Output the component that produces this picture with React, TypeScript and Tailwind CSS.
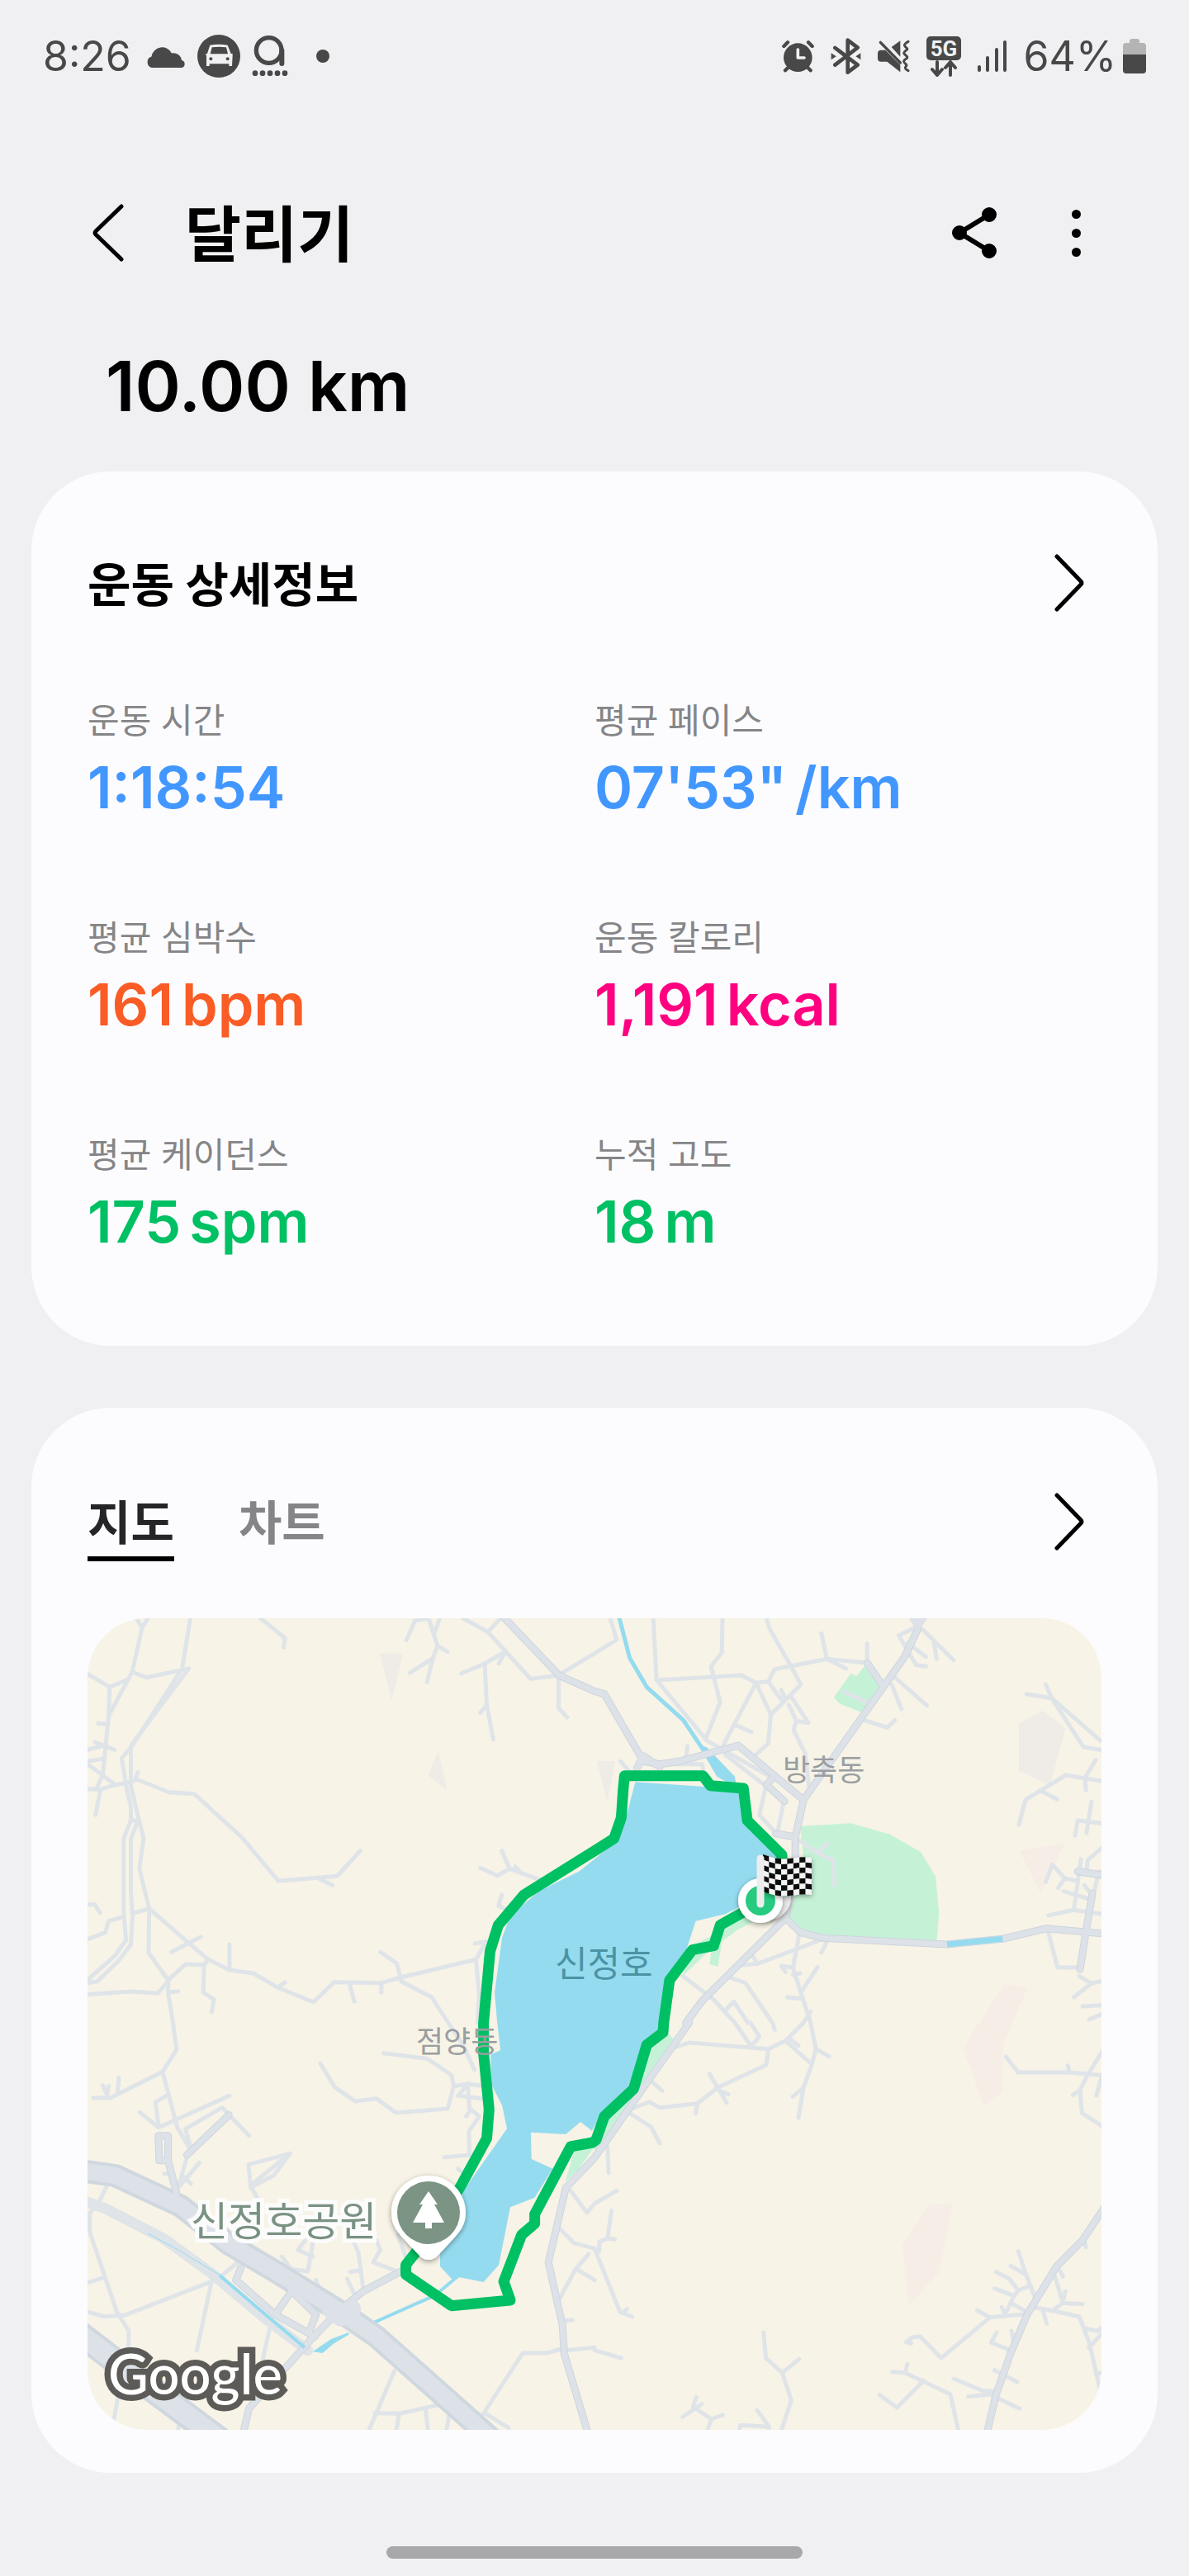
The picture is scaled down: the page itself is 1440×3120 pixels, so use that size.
import type { ReactNode } from "react";

/* ---------- map geometry ----------
   The map sheet is split into four quarters (A top left, B top right,
   C bottom left, D bottom right), each with its own 1568 x 1500 grid.
   A letter in a point list switches the quarter. */
const QUARTERS: Record<string, [number, number]> = {
  A: [-6, -10],
  B: [614, -10],
  C: [-6, 490],
  D: [614, 490],
};

function pts(list: string): string {
  let origin = QUARTERS.A;
  const out: string[] = [];
  for (const token of list.trim().split(/\s+/)) {
    if (QUARTERS[token]) {
      origin = QUARTERS[token];
      continue;
    }
    const [x, y] = token.split(",").map(Number);
    out.push(`${(origin[0] + (x * 620) / 1568).toFixed(1)},${(origin[1] + y / 3).toFixed(1)}`);
  }
  return out.join(" ");
}

const LAKE =
  "B 125,625 440,650 455,765 570,890 570,950 480,1040 435,1085 400,1105 310,1130 280,1240 230,1340 212,1500 D 205,35 150,85 115,240 25,330 0,375 C 1560,392 1525,360 1480,405 1373,398 1375,495 1440,530 1385,635 1310,670 1275,880 1228,942 1155,925 1130,930 1095,885 1095,840 1160,620 1300,385 1285,300 1250,220 1250,115 1280,100 1270,0 A 1262,1390 1285,1190 1310,1110 1400,1020 1520,950 1568,905 B 75,830 95,760";

const ROUTE =
  "B 580,1040 574,890 468,765 456,648 355,638 332,602 92,602 88,650 82,755 60,830 0,875 A 1352,1035 1273,1145 1248,1240 1228,1500 C 1228,110 1245,315 1238,420 1155,600 1050,790 990,880 990,915 1130,1028 1310,1008 1290,940 1345,770 1385,730 1385,695 1495,450 1562,435 D 5,425 30,340 120,240 160,80 210,35 B 212,1500 230,1345 300,1235 365,1220 385,1145 460,1095 510,1060";

const PARKS = [
  "B 630,785 785,775 905,815 1000,880 1045,970 1055,1100 1048,1205 700,1190 630,1170 595,1115 640,900",
  "B 785,230 803,240 827,203 880,285 825,375 750,340 733,318",
  "B 500,1125 440,1160 390,1205 378,1295 353,1288 358,1230 270,1330 300,1220 380,1170 450,1110",
  "D 225,35 242,60 150,220 105,320 30,440 0,465 0,430 30,340 120,240 160,80",
  "C 1505,470 1568,450 1520,530 1478,578",
];

const GREY_PATCHES = [
  "A 911,158 981,158 947,330",
  "A 1090,512 1058,600 1117,657",
  "B 1372,365 1443,430 1395,635 1300,585 1300,412",
  "B 7,548 62,548 40,700",
];

const PINK_PATCHES = [
  "B 1302,875 1440,845 1367,1030",
  "B 1252,1362 1327,1370 1280,1500 1180,1500",
  "D 1175,0 1282,0 1252,75 1252,248 1192,302 1130,95",
  "D 1022,662 1098,656 1055,905 963,1030 943,810",
];

const LANES = [
  "A 165,30 182,65 200,30",
  "A 182,65 152,225 195,245 325,213",
  "A 330,30 305,213",
  "A 152,225 80,385 62,600",
  "A 15,232 83,280 135,255",
  "A 83,280 80,385",
  "A 48,412 75,415",
  "A 15,508 65,492 38,480 98,508",
  "A 15,550 65,540",
  "A 15,560 62,600 100,635",
  "A 15,650 55,652 100,635 150,625",
  "A 62,600 42,650 55,652 40,745",
  "A 325,213 150,490",
  "A 305,213 148,500 120,538 135,650 148,715 148,765 126,830 126,1100 133,1200 100,1255 15,1345",
  "A 148,500 148,640 170,750 187,830 174,940 204,1085 325,1210 385,1270 450,1308 523,1320 598,1372 707,1425 770,1352 915,1355 975,1335 1205,1270 1215,1400 1210,1500",
  "A 165,615 265,662 342,668 487,825 600,985 780,967 850,875",
  "A 160,620 170,590",
  "A 725,977 765,1000",
  "A 170,765 148,830 148,1020 153,1110 148,1215 110,1275 45,1350 15,1355",
  "A 148,765 170,765",
  "A 153,1103 204,1085",
  "A 15,1070 38,1070 53,1100",
  "A 15,1197 70,1172 80,1130 125,1115",
  "A 272,1243 362,1188",
  "A 204,1085 202,1245 262,1345 262,1390 277,1500 C 288,97 245,178 85,273 33,273",
  "A 262,1345 315,1287 372,1290 385,1270",
  "A 372,1290 370,1390 402,1415 396,1460",
  "A 450,1215 450,1308",
  "A 15,1397 150,1386 230,1393 262,1350",
  "A 262,1388 292,1386",
  "A 598,1372 620,1353",
  "A 817,1355 832,1422",
  "A 915,1355 915,1390",
  "A 912,1243 962,1283 977,1350 1070,1408 1120,1500 C 1165,80 1200,170",
  "A 1205,1270 1235,1205 1202,1212",
  "A 545,30 620,102 616,136",
  "A 1060,30 1018,40 992,110",
  "A 1060,30 1087,130 1118,152",
  "A 1094,30 1077,85",
  "A 1087,130 1073,175 1003,228",
  "A 1073,175 1055,262",
  "A 1165,30 1242,80 1372,250 1460,238",
  "A 1280,30 1242,80",
  "A 1160,230 1232,195 1295,150 1275,195",
  "A 1232,195 1238,345 1258,470",
  "A 1238,345 1218,373",
  "A 1458,245 1458,357 1484,390",
  "A 1460,235 1568,158 B 68,108 48,30",
  "A 1284,875 1308,940 1270,965 1218,937",
  "A 1308,940 1400,980",
  "A 1325,932 1345,958",
  "A 1284,1035 1274,1075 1300,1090",
  "B 180,30 190,255 275,375 345,475 560,620",
  "B 190,255 450,237 495,265 395,490",
  "B 392,30 390,155 357,205 385,335 340,470",
  "B 527,30 535,65 600,200 632,270 600,310 540,380 532,485 495,525",
  "B 495,265 532,260 552,215 712,178 835,192 835,122",
  "B 712,178 695,85",
  "B 712,178 770,213",
  "B 495,265 540,380",
  "B 532,260 575,330",
  "B 572,290 585,325",
  "B 600,310 655,410 618,403",
  "B 595,345 618,403 610,437 645,520 658,650",
  "B 435,420 480,443",
  "B 765,298 840,338",
  "B 980,65 932,92 985,200 1015,205",
  "B 960,120 1015,170",
  "B 1000,65 1100,182",
  "B 1040,120 1048,178",
  "B 920,245 1018,347",
  "B 910,270 940,360",
  "B 825,400 897,427 920,400",
  "B 285,495 280,540",
  "B 80,550 110,590",
  "B 230,560 330,560 335,600",
  "B 400,525 525,640 505,745 555,810",
  "B 580,695 562,800",
  "B 625,835 680,880 730,910 735,1000",
  "B 680,880 715,850",
  "B 1323,305 1400,320 1550,475",
  "B 1382,270 1400,320 1497,497 1568,512",
  "B 1300,780 1320,690 1443,600 1568,625",
  "B 1365,655 1417,688",
  "B 1505,655 1502,610 1535,545",
  "B 1472,820 1480,765 1568,777",
  "B 1522,697 1507,810",
  "B 1568,850 1510,910 1508,945",
  "B 1490,905 1468,1090 1568,1107",
  "B 1382,988 1402,925 1440,975 1480,985",
  "B 1420,1010 1440,975",
  "B 1437,1022 1515,1050",
  "B 1390,1110 1468,1090",
  "B 1500,1000 1520,1030",
  "B 1545,950 1525,1050",
  "B 1390,1170 1418,1298 1487,1300",
  "B 1485,1330 1522,1357 1468,1407",
  "B 1522,1357 1568,1345",
  "B 1495,1440 1568,1435",
  "B 1515,1487 1568,1462",
  "B 627,1180 608,1300 632,1390 662,1500 D 678,95 665,155 640,235 625,345",
  "B 695,1245 712,1205",
  "B 455,1290 500,1285 690,1200",
  "B 480,1250 500,1285",
  "B 585,1315 572,1293 610,1300",
  "B 608,1325 630,1320",
  "B 632,1390 683,1298",
  "B 590,1407 632,1412",
  "B 270,1330 365,1415 430,1500 D 480,85 505,50 478,0",
  "B 405,1450 427,1423 470,1500",
  "B 412,1335 462,1355 545,1500 D 552,25",
  "B 662,1460 640,1500 D 585,65 532,95 290,72 240,92",
  "D 585,65 665,150",
  "D 600,60 625,83",
  "D 678,95 718,122",
  "D 640,235 607,268",
  "D 532,95 526,153 378,235 315,293 200,308 168,287 115,312",
  "D 352,185 405,290",
  "D 390,250 410,260",
  "D 315,293 310,330",
  "D 170,208 208,247",
  "D 110,330 173,378 200,438",
  "D 40,450 43,545",
  "D 68,610 0,657 C 1545,690 1495,610",
  "C 1455,740 1505,800 1568,820 D 15,830 15,795 40,783 52,683",
  "D 40,783 62,787",
  "D 0,820 78,1050 115,1068",
  "D 85,1055 100,1040",
  "C 1550,840 1510,895 1462,1000",
  "C 1520,900 1568,935",
  "C 1480,1190 1568,1180 D 0,1190 82,1218",
  "C 1480,1082 1500,1080",
  "D 1260,122 1297,180 1450,180 1568,192",
  "D 1450,155 1455,180",
  "D 1568,80 1510,190 1487,245 1493,328 1568,385",
  "D 1465,262 1487,245",
  "D 1555,190 1537,265",
  "D 518,1125 525,1218 575,1272 603,1372 567,1500",
  "D 575,1272 627,1222",
  "D 312,1360 302,1395 358,1440 340,1500",
  "D 270,1432 328,1385",
  "D 358,1440 393,1425",
  "D 440,1500 447,1462 535,1468 498,1408",
  "D 535,1468 528,1500",
  "D 873,1352 927,1398 1008,1300",
  "D 912,1268 952,1272 1090,1350 1118,1500",
  "D 952,1272 958,1240",
  "D 970,1165 955,1160 975,1142 998,1140 1062,1218 1212,1070 1322,1058",
  "D 1172,1045 1212,1070",
  "D 1298,830 1322,915 1350,1000",
  "D 1275,883 1322,915",
  "D 1230,905 1270,930 1298,972 1335,955",
  "D 1225,965 1285,992 1298,972",
  "D 1285,992 1258,1058 1247,1033",
  "D 1280,1020 1322,1050",
  "D 1350,1035 1400,1045 1485,1068 1515,1160 1550,1340",
  "D 1410,920 1435,1018 1400,1048",
  "D 1435,1018 1495,1022",
  "D 1435,1010 1442,975",
  "D 1420,890 1435,922",
  "D 1375,1050 1385,1093",
  "D 1500,1110 1540,1120 1568,1095",
  "D 1515,1180 1568,1110",
  "D 1535,1275 1568,1270",
  "D 1232,1125 1215,1162 1275,1190",
  "D 1277,1120 1285,1165",
  "D 1225,1262 1295,1305",
  "D 1100,1293 1190,1337 1235,1340",
  "D 1145,1358 1210,1350 1302,1402",
  "D 1500,790 1505,815",
  "C 62,228 75,262 80,230",
  "C 111,200 108,250",
  "C 245,178 290,380 330,460",
  "C 175,325 233,380 450,265",
  "C 262,262 223,288 233,375",
  "C 330,450 315,385 428,308 510,410",
  "C 290,610 322,480",
  "C 300,590 358,508",
  "C 310,560 332,585",
  "C 250,548 270,548",
  "C 515,590 635,475 508,515 515,595 535,635",
  "C 515,598 585,555 635,475",
  "C 728,148 773,235 835,285 900,275 960,327 1118,312 1137,230 1130,190 1055,130 922,110",
  "C 1137,230 1180,222 1230,230",
  "C 1180,222 1150,265 1225,275",
  "C 1180,230 1185,310 1215,340 1183,395 1185,480 1108,488",
  "C 1175,340 1190,315",
  "C 1150,530 1165,545",
  "C 75,590 45,665 22,690 22,760 105,1050 142,1120 140,1180",
  "C 15,945 65,925",
  "C 15,1050 65,1067 130,1062 395,940 350,1190",
  "C 420,925 480,865",
  "C 575,1100 545,1260",
  "C 610,850 640,895 690,903 705,800",
  "C 705,850 660,825 685,785",
  "C 820,770 845,835 860,970",
  "C 900,790 912,825 890,870 980,910",
  "C 820,905 845,900",
  "C 810,930 830,980",
  "C 715,935 730,975",
  "C 675,930 665,950",
  "C 965,770 990,850",
  "C 955,1265 870,1500",
  "C 895,1418 970,1420 1085,1390",
  "C 970,1420 958,1500",
  "C 1050,1400 1060,1500",
  "C 1125,1410 1112,1500",
  "C 1225,1425 1348,1200 1422,1200 1480,1180",
  "C 1235,1420 1305,1472",
  "C 110,1350 95,1450",
  "C 295,1460 290,1500",
];

const STREETS = [
  "A 1285,20 1460,238 1568,295 B 30,305 150,550 200,560 260,550 440,492 640,690",
  "B 130,575 150,530 200,570",
  "B 545,610 527,635 582,695",
  "B 835,192 885,278",
  "B 990,30 990,70 950,170 640,690 615,825 615,950 585,1120 330,1420 280,1500 D 290,0 165,210 30,440 0,490 C 1480,600 1427,870 1470,1100 1475,1200 1550,1500",
  "B 555,812 615,825",
  "B 585,1120 632,1172 700,1192 1080,1215 1250,1195 1385,1157 1568,1177",
  "B 1480,950 1568,965",
  "B 1525,1030 1505,1170 1487,1305",
  "D 1568,660 1495,790 1415,885 1325,1060 1275,1200 1230,1350 1200,1500",
  "C 448,335 320,480",
  "C 288,620 262,500 235,500 232,410 262,410 262,500",
  "C 485,890 470,935 590,1060 640,975",
  "C 590,1060 712,1140",
  "C 640,975 715,1060 695,1120",
  "C 490,1500 510,1400 610,1270 700,1150 790,1040 860,975 980,900",
];

const NOTO = "'Noto Sans CJK KR', sans-serif";

/* Chequered cloth of the finish flag, drawn with a slight wave. */
function FlagCloth() {
  const cols = 8;
  const rows = 7;
  const at = (c: number, r: number) => {
    const t = c / cols;
    const x = 818 + t * 59;
    const y = 286 + (r * 45) / rows + t * 7 + Math.sin(t * Math.PI * 1.6) * 3;
    return `${x.toFixed(1)},${y.toFixed(1)}`;
  };
  const cells: ReactNode[] = [];
  for (let c = 0; c < cols; c++) {
    for (let r = 0; r < rows; r++) {
      cells.push(
        <polygon
          key={`${c}-${r}`}
          points={`${at(c, r)} ${at(c + 1, r)} ${at(c + 1, r + 1)} ${at(c, r + 1)}`}
          fill={(c + r) % 2 === 0 ? "#0c0c0c" : "#f4f4f4"}
        />,
      );
    }
  }
  return <g filter="url(#shadow)">{cells}</g>;
}

function RouteMap() {
  return (
    <svg viewBox="0 0 1228 983" className="block h-auto w-full rounded-[72px]" role="img" aria-label="달리기 경로 지도">
      <defs>
        <filter id="shadow" x="-30%" y="-30%" width="160%" height="170%">
          <feDropShadow dx="0" dy="2" stdDeviation="3" floodColor="#000" floodOpacity="0.4" />
        </filter>
      </defs>
      <rect width="1228" height="983" fill="#f7f3e6" />
      <g fill="#efebe7">
        {GREY_PATCHES.map((p) => (
          <polygon key={p} points={pts(p)} />
        ))}
      </g>
      <g fill="#f7ede7">
        {PINK_PATCHES.map((p) => (
          <polygon key={p} points={pts(p)} />
        ))}
      </g>
      <g fill="#c5f2d7">
        {PARKS.map((p) => (
          <polygon key={p} points={pts(p)} />
        ))}
      </g>
      <g fill="none" stroke="#dfe4e9" strokeWidth="5" strokeLinecap="round" strokeLinejoin="round">
        {LANES.map((p) => (
          <polyline key={p} points={pts(p)} />
        ))}
      </g>
      <polygon points={pts(LAKE)} fill="#95dbef" />
      <g fill="none" stroke="#95dbef">
        <polyline points={pts("B 75,25 108,175 160,280 272,400 340,520")} strokeWidth="5" />
        <polyline points={pts("C 1150,920 1080,990 875,1098")} strokeWidth="4" />
      </g>
      <polygon points={pts("B 325,490 345,500 430,605 435,645 375,605 340,535")} fill="#95dbef" />
      <g fill="none" strokeLinecap="round" strokeLinejoin="round">
        <polyline points={pts("C 0,645 70,675 250,785 400,915 560,1075 690,1190")} stroke="#dfe4e9" strokeWidth="13" />
        {STREETS.map((p) => (
          <polyline key={p} points={pts(p)} stroke="#cdd5de" strokeWidth="9" />
        ))}
        <g stroke="#cfd7df">
          <polyline points={pts("C -20,535 100,555 300,665 450,805 600,910 790,1050 900,1140 1280,1540")} strokeWidth="28" />
          <polyline points={pts("C -20,1120 200,1320 460,1550")} strokeWidth="32" />
        </g>
        <g stroke="#dde2e8">
          {STREETS.map((p) => (
            <polyline key={p} points={pts(p)} strokeWidth="7" />
          ))}
          <polyline points={pts("C -20,535 100,555 300,665 450,805 600,910 790,1050 900,1140 1280,1540")} strokeWidth="20" />
          <polyline points={pts("C -20,1120 200,1320 460,1550")} strokeWidth="24" />
          <polyline points={pts("C 760,1040 790,1070 825,1040")} strokeWidth="22" />
        </g>
        <polyline points={pts("B 965,15 990,62 1018,15")} stroke="#dde2e8" strokeWidth="7" />
        <g stroke="#95dbef" strokeLinecap="butt">
          <polyline points={pts("C 200,765 300,830 425,920")} strokeWidth="1" />
          <polyline points={pts("C 420,918 580,1080 680,1180")} strokeWidth="4" />
          <polyline points={pts("B 1080,1215 1250,1195")} strokeWidth="7" />
        </g>
      </g>
      <polygon points={pts("C 705,1195 760,1150 815,1125 815,1133 770,1165 735,1200")} fill="#95dbef" />

      <g filter="url(#shadow)">
        <circle cx="825" cy="338" r="27" fill="#e9e9e9" />
      </g>
      <polyline points={pts(ROUTE)} fill="none" stroke="#00c064" strokeWidth="13" strokeLinejoin="round" />
      <g filter="url(#shadow)">
        <circle cx="815" cy="342" r="27" fill="#fff" />
      </g>
      <circle cx="815" cy="342" r="18" fill="#26cb80" />
      <FlagCloth />
      <line x1="815" y1="291" x2="815" y2="346" stroke="#ededed" strokeWidth="9" strokeLinecap="round" />

      <text x="566" y="434" fontSize="43" fill="#4b93a4" fontFamily={NOTO}>신정호</text>
      <text x="842" y="197" fontSize="36" fill="#9a9ea2" fontFamily={NOTO}>방축동</text>
      <text x="398" y="526" fontSize="36" fill="#9a9ea2" fontFamily={NOTO}>점양동</text>
      <text
        x="125"
        y="748"
        fontSize="49"
        fill="#7a9282"
        stroke="#fcfcfc"
        strokeWidth="10"
        paintOrder="stroke"
        fontFamily={NOTO}
      >
        신정호공원
      </text>

      <g filter="url(#shadow)">
        <path d="M413 675c25 0 45 20 45 45 0 16-8 24-18 35l-15 16c-7 8-17 8-24 0l-15-16c-10-11-18-19-18-35 0-25 20-45 45-45Z" fill="#fff" />
      </g>
      <circle cx="413" cy="720" r="38" fill="#7b9484" />
      <path d="m413 694 11 16h-4l12 22h-15v7h-8v-7h-15l12-22h-4Z" fill="#fff" />

      <text
        x="25"
        y="940"
        fontSize="67"
        fontWeight="500"
        fill="#fff"
        stroke="#5c5b57"
        strokeWidth="15"
        paintOrder="stroke"
        fontFamily="Lato, sans-serif"
      >
        Google
      </text>
    </svg>
  );
}

/* ---------- status bar icons ---------- */
function CloudIcon() {
  return (
    <svg width="48" height="27" viewBox="0 0 48 27" fill="#484848" aria-hidden="true">
      <path d="M7 27a7 7 0 0 1-.5-13.5A13 13 0 0 1 31 9.500A10 10 0 0 1 43 18a4.600 4.600 0 0 1 0 9Z" />
    </svg>
  );
}

function CarIcon() {
  return (
    <svg width="52" height="52" viewBox="0 0 156 156" aria-hidden="true">
      <circle cx="78" cy="78" r="78" fill="#484848" />
      <path
        fill="#f0f0f2"
        fillRule="evenodd"
        d="M46 38q32-5 64 0l12 31h6v8l-2 37h-11v-8H44v8H33V77l-3-8h6ZM53 46 47 70h64l-6-24q-26-4-52 0ZM49 82a6 6 0 1 0 .1 0ZM110 82a6 6 0 1 0 .1 0Z"
      />
    </svg>
  );
}

function RingAppIcon() {
  return (
    <svg width="44" height="50" viewBox="0 0 132 150" fill="none" stroke="#484848" aria-hidden="true">
      <circle cx="62" cy="54" r="46" strokeWidth="16" />
      <path d="M109 54v48" strokeWidth="18" strokeLinecap="round" />
      <g fill="#484848" stroke="none">
        <circle cx="12" cy="137" r="10" />
        <circle cx="39" cy="137" r="10" />
        <circle cx="66" cy="137" r="10" />
        <circle cx="93" cy="137" r="10" />
        <circle cx="120" cy="137" r="10" />
      </g>
    </svg>
  );
}

function AlarmIcon() {
  return (
    <svg width="39" height="40" viewBox="0 0 117 120" fill="none" stroke="#484848" strokeLinecap="round" aria-hidden="true">
      <circle cx="58" cy="65" r="52" fill="#484848" stroke="none" />
      <path d="M7 24 21 10M110 24 96 10" strokeWidth="13" />
      <path d="m22 102-10 10M94 102l10 10" strokeWidth="13" />
      <path d="M58 36v30h23" stroke="#f0f0f2" strokeWidth="11" strokeLinejoin="round" />
    </svg>
  );
}

function BluetoothIcon() {
  return (
    <svg width="37" height="44" viewBox="0 0 111 132" fill="none" stroke="#484848" aria-hidden="true">
      <path d="m16 36 82 62-36 27V8l36 27-82 63" strokeWidth="14" strokeLinecap="round" strokeLinejoin="round" />
      <path d="M2 55v24l18-12ZM109 55v24L91 67Z" fill="#484848" stroke="none" />
    </svg>
  );
}

function MuteVibrateIcon() {
  return (
    <svg width="39" height="40" viewBox="0 0 117 120" fill="none" stroke="#484848" strokeLinecap="round" aria-hidden="true">
      <path d="M82 4v58L50 27ZM0 50q0-12 12-12h16l54 54v26L34 80H12Q0 80 0 68Z" fill="#484848" stroke="none" />
      <path d="M10 10 82 84" strokeWidth="10" />
      <path
        d="M111 7c-22 12-13 18-5 24 7 6-16 12-10 20 8 9 16 12 8 18-16 10-8 14 0 22 5 7-16 10 7 22"
        strokeWidth="9"
        strokeLinejoin="round"
      />
    </svg>
  );
}

function FiveGIcon() {
  return (
    <svg width="42" height="49" viewBox="0 0 42 49" fill="none" aria-hidden="true">
      <rect width="42" height="29" rx="5" fill="#484848" />
      <text x="21" y="24" textAnchor="middle" fontSize="26" fontWeight="700" fill="#f0f0f2" fontFamily="Roboto, sans-serif">5G</text>
      <path d="M13 31v16m-6-7 6 7 6-7M29 47V31m-6 7 6-7 6 7" stroke="#484848" strokeWidth="4" strokeLinecap="round" strokeLinejoin="round" />
    </svg>
  );
}

function SignalIcon() {
  return (
    <svg width="36" height="40" viewBox="0 0 36 40" stroke="#484848" strokeWidth="4" strokeLinecap="round" aria-hidden="true">
      <path d="M2 33v4M12 22v15M23 12v25M33 3v34" />
    </svg>
  );
}

function BatteryIcon() {
  return (
    <svg width="28" height="42" viewBox="0 0 28 42" aria-hidden="true">
      <path d="M0 20V9q0-4 4-4h4V3q0-3 3-3h6q3 0 3 3v2h4q4 0 4 4v11Z" fill="#b4b4b5" />
      <path d="M0 19h28v19q0 4-4 4H4q-4 0-4-4Z" fill="#484848" />
    </svg>
  );
}

function ChevronIcon() {
  return (
    <svg width="38" height="70" viewBox="0 0 38 70" fill="none" stroke="#000" strokeWidth="5" strokeLinecap="round" strokeLinejoin="round" aria-hidden="true">
      <path d="m4 3 29 30q2 2 0 4L4 67" />
    </svg>
  );
}

/* ---------- content ---------- */
const STATS = [
  { label: "운동 시간", value: "1:18:54", unit: "", color: "text-[#4297ff]" },
  { label: "평균 페이스", value: "07'53\"", unit: "/km", color: "text-[#4297ff]" },
  { label: "평균 심박수", value: "161", unit: "bpm", color: "text-[#fa5c26]" },
  { label: "운동 칼로리", value: "1,191", unit: "kcal", color: "text-[#ff0080]" },
  { label: "평균 케이던스", value: "175", unit: "spm", color: "text-[#00c064]" },
  { label: "누적 고도", value: "18", unit: "m", color: "text-[#00c064]" },
];

export default function App() {
  return (
    <div className="min-h-screen bg-[#f0f0f2] font-[Inter,'Noto_Sans_CJK_KR',sans-serif] text-black">
      <div className="flex h-[136px] items-center justify-between px-[52px] text-[#484848]">
        <div className="flex items-center gap-[14px]">
          <span className="mr-1 text-[50px] leading-none">8:26</span>
          <CloudIcon />
          <CarIcon />
          <RingAppIcon />
          <span className="ml-5 size-4 rounded-full bg-[#484848]" />
        </div>
        <div className="flex items-center gap-[20px]">
          <AlarmIcon />
          <BluetoothIcon />
          <MuteVibrateIcon />
          <FiveGIcon />
          <SignalIcon />
          <span className="flex items-center gap-[8px]">
            <span className="text-[50px] leading-none">64%</span>
            <BatteryIcon />
          </span>
        </div>
      </div>

      <header className="mt-[98px] flex h-[96px] items-center pr-[122px] pl-[108px]">
        <button type="button" aria-label="뒤로" className="flex h-[72px] w-[48px] items-center">
          <svg width="44" height="70" viewBox="0 0 44 70" fill="none" stroke="#000" strokeWidth="5" strokeLinecap="round" strokeLinejoin="round" aria-hidden="true">
            <path d="M39 3 8 33q-2 2 0 4l31 30" />
          </svg>
        </button>
        <h1 className="ml-[68px] grow pt-1 text-[74px] leading-none font-bold">달리기</h1>
        <button type="button" aria-label="공유">
          <svg width="56" height="64" viewBox="0 0 56 64" stroke="#000" strokeWidth="6" aria-hidden="true">
            <path d="M46 10 10 32l36 22" fill="none" />
            <circle cx="46" cy="10" r="6" />
            <circle cx="10" cy="32" r="6" />
            <circle cx="46" cy="54" r="6" />
          </svg>
        </button>
        <button type="button" aria-label="더보기" className="ml-[80px] flex w-[30px] flex-col items-center gap-[12px]">
          <span className="size-[11px] rounded-full bg-black" />
          <span className="size-[11px] rounded-full bg-black" />
          <span className="size-[11px] rounded-full bg-black" />
        </button>
      </header>

      <p className="mt-[90px] ml-[128px] text-[84px] leading-[96px] font-semibold">10.00 km</p>

      <main className="mt-[55px] flex flex-col gap-[75px] px-[38px]">
        <section className="rounded-[96px] bg-[#fcfcfe] px-[68px] pt-[95px] pb-[110px]">
          <div className="flex h-[80px] items-center justify-between pr-[20px]">
            <h2 className="pt-1 text-[57px] leading-none font-bold">운동 상세정보</h2>
            <button type="button" aria-label="운동 상세정보 보기">
              <ChevronIcon />
            </button>
          </div>
          <dl className="mt-[101px] grid grid-cols-2 gap-y-[116px]">
            {STATS.map((s) => (
              <div key={s.label}>
                <dt className="text-[42px] leading-[52px] text-[#858587]">{s.label}</dt>
                <dd className={`mt-[15px] flex gap-[10px] text-[70px] leading-[80px] font-semibold ${s.color}`}>
                  <span>{s.value}</span>
                  {s.unit && <span>{s.unit}</span>}
                </dd>
              </div>
            ))}
          </dl>
        </section>

        <section className="rounded-[96px] bg-[#fcfcfe] px-[68px] pt-[100px] pb-[52px]">
          <div className="flex items-start justify-between pr-[20px]">
            <div role="tablist" className="flex gap-[78px] text-[57px] leading-[80px] font-bold">
              <button type="button" role="tab" aria-selected="true" className="border-b-[6px] border-black text-[#252527]">
                지도
              </button>
              <button type="button" role="tab" aria-selected="false" className="border-b-[6px] border-transparent text-[#858587]">
                차트
              </button>
            </div>
            <button type="button" aria-label="지도 크게 보기" className="flex h-[76px] items-center">
              <ChevronIcon />
            </button>
          </div>
          <div className="mt-[69px]">
            <RouteMap />
          </div>
        </section>
      </main>

      <div className="mt-[89px] flex justify-center pb-[21px]">
        <span className="h-[15px] w-[504px] rounded-full bg-[#a8a8aa]" />
      </div>
    </div>
  );
}
